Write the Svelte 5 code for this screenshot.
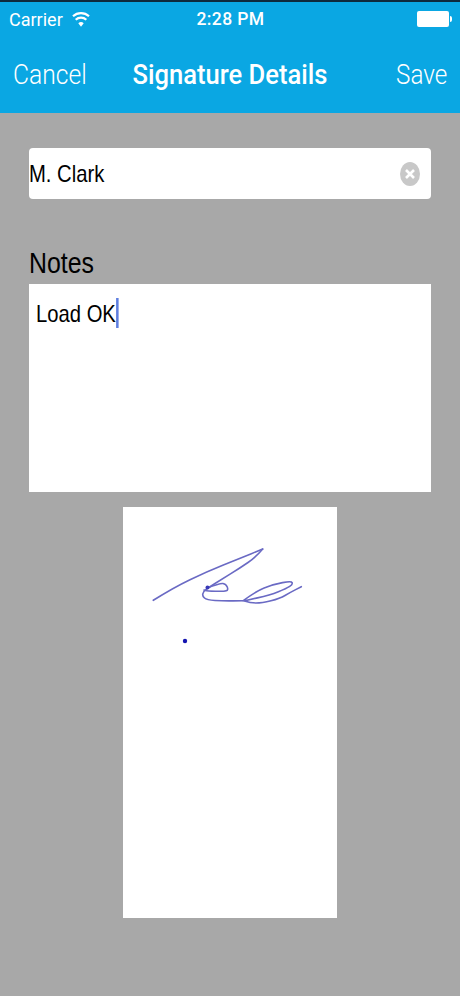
<script>
  let name = 'M. Clark';
  let notes = 'Load OK';

  // signature strokes, split at the sharp turns
  const strokes = [
    [[153.3, 600.3], [173.3, 587.7], [206.7, 571.7], [240, 558.3], [262.7, 549]],
    [[262.7, 549], [256, 557], [240, 568], [221.7, 579.3], [208.3, 587.7], [203.3, 591.7], [202.3, 596], [206.7, 600], [223.3, 601], [243.3, 600.7]],
    [[243.3, 600.7], [255, 591.7], [273.3, 584.3], [291.7, 581], [292.7, 584.3], [286.7, 588.3], [270, 595], [245, 600.7]],
    [[244.5, 601], [250, 603], [262, 603], [280, 598.5], [290, 592.5], [301.3, 586.7]],
    [[207, 588], [220, 583], [226, 584], [228.5, 590], [224, 591.5], [207, 591], [204, 590]]
  ];

  function smooth(points) {
    let d = `M${points[0][0]} ${points[0][1]}`;
    for (let i = 1; i < points.length - 1; i++) {
      const mx = (points[i][0] + points[i + 1][0]) / 2;
      const my = (points[i][1] + points[i + 1][1]) / 2;
      d += `Q${points[i][0]} ${points[i][1]} ${mx} ${my}`;
    }
    const last = points[points.length - 1];
    return d + `L${last[0]} ${last[1]}`;
  }
</script>

<div class="screen">
  <header class="header">
    <div class="status">
      <div class="status-left">
        <span>Carrier</span>
        <svg class="wifi" viewBox="0 0 18 16" width="18" height="16">
          <path d="M9 15.800 6.300 12.300a4 4 0 0 1 5.400 0Z" fill="#fff" />
          <path d="M1 5.300a11.800 11.800 0 0 1 16 0M3.700 8.800a7.800 7.800 0 0 1 10.600 0" fill="none" stroke="#fff" stroke-width="2.200" />
        </svg>
      </div>
      <span class="time">2:28 PM</span>
      <div class="battery">
        <div class="battery-body"></div>
        <div class="battery-tip"></div>
      </div>
    </div>
    <nav class="nav">
      <span class="nav-left">Cancel</span>
      <span class="title">Signature Details</span>
      <span class="nav-right">Save</span>
    </nav>
  </header>

  <main class="content">
    <div class="field">
      <span class="narrow">{name}</span>
      <svg class="clear" viewBox="0 0 20 24" width="20" height="24">
        <ellipse cx="10" cy="12" rx="10" ry="12" fill="#c8c8c8" />
        <path d="M6 8 14 16M14 8 6 16" stroke="#fff" stroke-width="2.600" />
      </svg>
    </div>

    <label class="notes-label" for="notes"><span class="narrow">Notes</span></label>
    <div class="notes" id="notes">
      <div class="narrow notes-text">
        <span>{notes}</span><span class="caret"></span>
      </div>
    </div>

    <div class="signature">
      <svg viewBox="123 507 214 411" width="214" height="411">
        {#each strokes as points}
          <path class="stroke" d={smooth(points)} />
        {/each}
        <circle cx="207.500" cy="587.500" r="2" fill="#3a3ab8" />
        <circle cx="185" cy="641" r="2.200" fill="#1414b0" />
      </svg>
    </div>
  </main>
</div>

<style>
  :global(body) {
    margin: 0;
    background: #a8a8a8;
  }

  .screen {
    width: 460px;
    height: 996px;
    overflow: hidden;
    display: flex;
    flex-direction: column;
    font-family: "Liberation Sans", Arial, sans-serif;
  }

  .header {
    height: 111px;
    flex-shrink: 0;
    background: #0aa7e3;
    border-top: 2px solid #0e2a3c;
    color: #fff;
    font-family: Roboto, "Liberation Sans", sans-serif;
  }

  .status {
    height: 34px;
    padding: 0 8px 0 9px;
    display: grid;
    grid-template-columns: 1fr auto 1fr;
    align-items: center;
    font-size: 18px;
  }

  .status-left {
    display: flex;
    align-items: center;
    gap: 9px;
  }

  .time {
    font-weight: 500;
    font-size: 17.500px;
    letter-spacing: 0.400px;
  }

  .battery {
    justify-self: end;
    display: flex;
    align-items: center;
    gap: 1px;
  }

  .battery-body {
    width: 32px;
    height: 16px;
    background: #fff;
    border-radius: 2px;
  }

  .battery-tip {
    width: 2px;
    height: 6px;
    background: #fff;
    border-radius: 0 2px 2px 0;
  }

  .nav {
    height: 77px;
    padding: 0 13px;
    display: grid;
    grid-template-columns: 1fr auto 1fr;
    align-items: center;
    font-size: 28px;
    font-weight: 300;
  }

  .nav-left {
    transform: scaleX(0.88);
    transform-origin: left center;
  }

  .nav-right {
    justify-self: end;
    transform: scaleX(0.864);
    transform-origin: right center;
  }

  .title {
    font-size: 27px;
    font-weight: 500;
    transform: scaleX(0.946);
  }

  .content {
    padding: 35px 29px 0;
    display: flex;
    flex-direction: column;
    color: #000;
  }

  .narrow {
    display: inline-block;
    transform: scaleX(0.843);
    transform-origin: left center;
  }

  .field {
    height: 51px;
    box-sizing: border-box;
    background: #fff;
    border-radius: 4px;
    padding: 0 11px 0 0;
    display: flex;
    justify-content: space-between;
    align-items: center;
    font-size: 24px;
  }

  .clear {
    flex-shrink: 0;
  }

  .notes-label {
    margin-top: 47px;
    height: 38px;
    line-height: 34px;
    font-size: 29.500px;
  }

  .notes {
    height: 208px;
    box-sizing: border-box;
    padding: 15px 7px 0;
    background: #fff;
    font-size: 24px;
    line-height: 30px;
  }

  .notes-text {
    display: flex;
    align-items: flex-start;
  }

  .caret {
    width: 3px;
    height: 30px;
    margin-top: -1px;
    background: #5f7fe0;
  }

  .signature {
    width: 214px;
    height: 411px;
    margin: 15px auto 0;
    background: #fff;
  }

  .signature svg {
    display: block;
  }

  .stroke {
    fill: none;
    stroke: #6a6ac4;
    stroke-width: 1.600;
    stroke-linecap: round;
    stroke-linejoin: round;
  }
</style>
